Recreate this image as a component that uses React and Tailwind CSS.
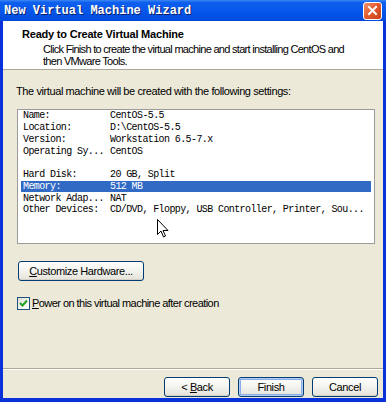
import React from 'react';

const ui = { fontFamily: '"Liberation Sans", Arial, sans-serif' };
const mono = { fontFamily: '"Liberation Mono", "Courier New", monospace' };

const rows = [
  ['Name:', 'CentOS-5.5'],
  ['Location:', 'D:\\CentOS-5.5'],
  ['Version:', 'Workstation 6.5-7.x'],
  ['Operating Sy...', 'CentOS'],
  null,
  ['Hard Disk:', '20 GB, Split'],
  ['Memory:', '512 MB', true],
  ['Network Adap...', 'NAT'],
  ['Other Devices:', 'CD/DVD, Floppy, USB Controller, Printer, Sou...'],
];

// XP style push button
const XpButton = ({ children, className = '', isDefault = false }) => (
  <button
    className={`h-[20px] rounded-[3px] border border-[#003c74] bg-[linear-gradient(to_bottom,#ffffff_0%,#f3f3ee_50%,#e3e2da_100%)] text-[11px] tracking-[-0.4px] text-black leading-none ${
      isDefault ? 'shadow-[inset_0_0_0_1px_#b4cbf3,inset_0_0_0_2px_#89adeb]' : 'shadow-[inset_0_-1px_0_#d6d0c5]'
    } ${className}`}
    style={ui}
  >
    {children}
  </button>
);

export default function App() {
  return (
    <div className="relative w-[386px] h-[402px] overflow-hidden flex flex-col bg-[#0831d9]">
      {/* 타이틀 바 */}
      <div className="h-[21px] shrink-0 flex items-center justify-between pl-[4px] pr-[4px] bg-[linear-gradient(to_bottom,#3b86f5_0%,#0f5fee_12%,#0556ea_55%,#004ad9_100%)]">
        <span
          className="text-white text-[12px] font-bold [text-shadow:1px_1px_0_#0a1c66]"
          style={mono}
        >
          New Virtual Machine Wizard
        </span>
        <div className="w-[19px] h-[18px] rounded-[3px] border border-white bg-[linear-gradient(135deg,#f0926a_0%,#e2582a_50%,#c6401a_100%)] flex items-center justify-center">
          <svg width="11" height="11" viewBox="0 0 11 11">
            <path d="M2 2 L9 9 M9 2 L2 9" stroke="#fff" strokeWidth="2" strokeLinecap="square" />
          </svg>
        </div>
      </div>

      {/* 본문 */}
      <div className="flex-1 flex flex-col mx-[3px] mb-[4px] bg-[#ece9d8]">
        {/* 헤더 */}
        <div className="h-[49px] shrink-0 bg-white border-b border-[#aca899] pl-[19px] pt-[7px]" style={ui}>
          <div className="text-[11px] font-bold tracking-[-0.2px] text-black leading-[13px]">
            Ready to Create Virtual Machine
          </div>
          <div className="pl-[21px] pt-[2px] text-[11px] tracking-[-0.7px] text-black leading-[12px] whitespace-nowrap">
            Click Finish to create the virtual machine and start installing CentOS and
            <br />
            then VMware Tools.
          </div>
        </div>

        <div className="flex-1 flex flex-col pl-[13px] pr-[8px]" style={ui}>
          <div className="pt-[15px] text-[11px] tracking-[-0.4px] text-black leading-[13px]">
            The virtual machine will be created with the following settings:
          </div>

          {/* 설정 목록 */}
          <div className="mt-[11px] ml-[1px] w-[358px] h-[135px] border border-[#9b9b9b] bg-white px-[3px]">
            {rows.map((r, i) =>
              r ? (
                <div
                  key={i}
                  className={`h-[11.75px] flex items-center pl-[2px] text-[10px] tracking-[-0.6px] whitespace-nowrap ${
                    r[2] ? 'bg-[#316ac5] text-white' : 'text-black'
                  }`}
                  style={mono}
                >
                  <span className="w-[87px] shrink-0">{r[0]}</span>
                  <span>{r[1]}</span>
                </div>
              ) : (
                <div key={i} className="h-[11.75px]" />
              )
            )}
          </div>

          <XpButton className="mt-[17px] ml-[2px] w-[126px]">
            <span className="underline">C</span>ustomize Hardware...
          </XpButton>

          <label className="mt-[14px] ml-[1px] flex items-center gap-[2px] text-[11px] tracking-[-0.55px] text-black">
            <span className="w-[13px] h-[13px] border border-[#1c5180] bg-[linear-gradient(135deg,#dcdbd5_0%,#f5f5f3_60%,#ffffff_100%)] flex items-center justify-center">
              <svg width="9" height="9" viewBox="0 0 9 9">
                <path d="M1 4 L3.5 6.5 L8 1.5" stroke="#21a121" strokeWidth="2" fill="none" />
              </svg>
            </span>
            <span>
              <span className="underline">P</span>ower on this virtual machine after creation
            </span>
          </label>

          <div className="flex-1" />
        </div>

        {/* 하단 버튼 */}
        <div className="h-[30px] shrink-0 border-t border-[#aca899] shadow-[inset_0_1px_0_#ffffff] flex items-start justify-end gap-[8px] pt-[8px] pr-[5px]">
          <XpButton className="w-[66px]">
            &lt; <span className="underline">B</span>ack
          </XpButton>
          <XpButton className="w-[66px]" isDefault>
            Finish
          </XpButton>
          <XpButton className="w-[66px]">Cancel</XpButton>
        </div>
      </div>

      {/* 마우스 커서 */}
      <svg className="absolute left-[157px] top-[219px]" width="13" height="20" viewBox="0 0 13 20">
        <path
          d="M0.5 0.5 L0.5 15.5 L4 12 L6.5 18 L8.5 17 L6 11.5 L11 11.5 Z"
          fill="#fff"
          stroke="#000"
          strokeWidth="1"
        />
      </svg>
    </div>
  );
}
